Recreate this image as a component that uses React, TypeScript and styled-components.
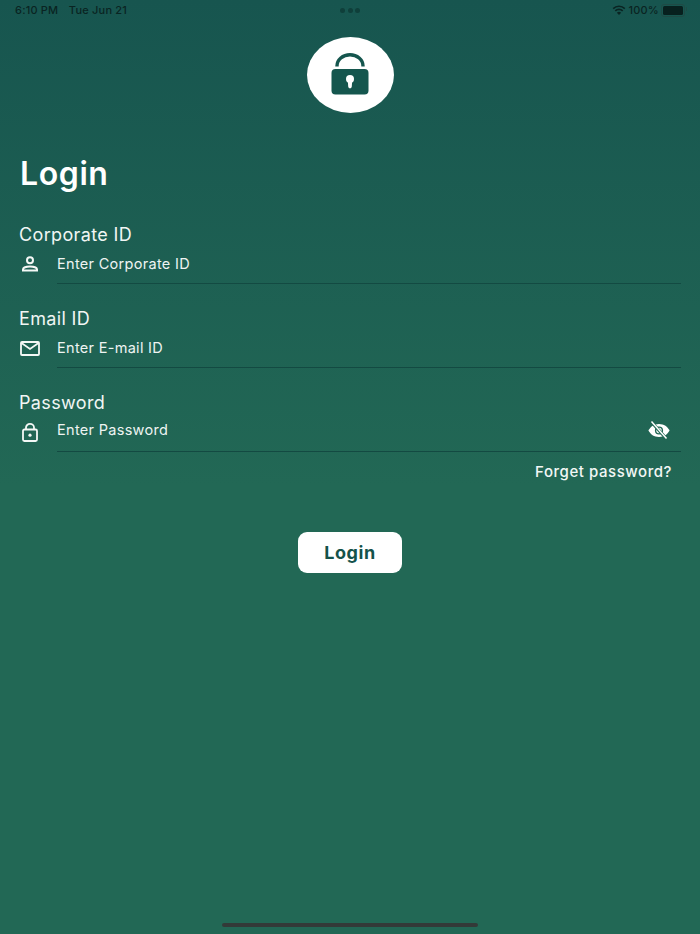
import { FC, ReactNode } from "react";
import styled, { createGlobalStyle } from "styled-components";

const GlobalStyle = createGlobalStyle`
  html, body {
    margin: 0;
    padding: 0;
    height: 100%;
  }

  body {
    font-family: Inter, "Liberation Sans", sans-serif;
    color: #fff;
  }
`;

const Page = styled.div`
  position: relative;
  display: flex;
  flex-direction: column;
  width: 700px;
  height: 934px;
  overflow: hidden;
  background: linear-gradient(180deg, #17554f 0%, #226855 52%, #226855 100%);
`;

const StatusBar = styled.div`
  display: grid;
  grid-template-columns: 1fr auto 1fr;
  align-items: center;
  height: 20px;
  padding: 0 15px;
  font-size: 11px;
  font-weight: 500;
  letter-spacing: 0.2px;
  color: #0a2422;
`;

const StatusTime = styled.div`
  display: flex;
  gap: 10.5px;
`;

const Dots = styled.div`
  display: flex;
  gap: 2.5px;
`;

const Dot = styled.span`
  width: 5px;
  height: 5px;
  border-radius: 50%;
  background: #0f3f3a;
`;

const StatusRight = styled.div`
  display: flex;
  justify-content: flex-end;
  align-items: center;
  gap: 3px;
`;

const Battery = styled.div`
  position: relative;
  width: 20px;
  height: 9px;
  margin-left: -1px;
  padding: 1px;
  border: 1px solid #1f4a45;
  border-radius: 3px;

  &::before {
    content: "";
    display: block;
    height: 100%;
    border-radius: 1.5px;
    background: #07201e;
  }

  &::after {
    content: "";
    position: absolute;
    top: 2px;
    right: -3px;
    width: 1.5px;
    height: 4px;
    border-radius: 0 1px 1px 0;
    background: #1f4a45;
  }
`;

const LogoWrap = styled.div`
  display: flex;
  justify-content: center;
  margin-top: 17px;
`;

const Logo = styled.div`
  display: flex;
  align-items: center;
  justify-content: center;
  width: 87px;
  height: 76px;
  padding-bottom: 2px;
  box-sizing: border-box;
  border-radius: 50%;
  background: #fff;
`;

const Form = styled.div`
  display: flex;
  flex-direction: column;
  padding: 0 19px;
`;

const Title = styled.h1`
  margin: 41px 0 0;
  padding-left: 1px;
  font-size: 32px;
  line-height: 40px;
  font-weight: 600;
  letter-spacing: 0.6px;
  color: #fff;
`;

const FieldList = styled.div`
  display: flex;
  flex-direction: column;
  gap: 24px;
  margin-top: 29px;
`;

const FieldBox = styled.div`
  display: flex;
  flex-direction: column;
`;

const Label = styled.div`
  font-size: 18px;
  line-height: 24px;
  letter-spacing: 0.35px;
  color: #f1f6f4;
`;

const InputRow = styled.div`
  display: flex;
  align-items: flex-start;
  height: 36px;
`;

const IconCell = styled.div`
  display: flex;
  align-items: center;
  justify-content: center;
  width: 22px;
  height: 22px;
  margin: 6px 16px 0 0;
`;

const InputBody = styled.div`
  flex: 1;
  display: flex;
  justify-content: space-between;
  height: 36px;
  border-bottom: 1px solid #134a42;
  box-sizing: content-box;
`;

const Placeholder = styled.div<{ $up?: boolean }>`
  margin-top: ${(p) => (p.$up ? "5px" : "7px")};
  font-size: 14.5px;
  line-height: 20px;
  letter-spacing: 0.3px;
  color: #eef4f2;
`;

const EyeCell = styled.div`
  margin: 6px 11px 0 0;
  height: 20px;
`;

const ForgotRow = styled.div`
  display: flex;
  justify-content: flex-end;
  padding: 11px 9px 0 0;
`;

const Forgot = styled.span`
  font-size: 15px;
  line-height: 20px;
  font-weight: 500;
  letter-spacing: 0.55px;
  color: #f2f7f5;
`;

const ButtonRow = styled.div`
  display: flex;
  justify-content: center;
  margin-top: 50px;
`;

const LoginButton = styled.button`
  width: 104px;
  height: 41px;
  padding: 0;
  border: 0;
  border-radius: 9px;
  background: #fff;
  font-family: inherit;
  font-size: 18px;
  font-weight: 700;
  letter-spacing: 0.6px;
  color: #14524a;
`;

const HomeBar = styled.div`
  position: absolute;
  left: 222px;
  bottom: 7px;
  width: 256px;
  height: 4px;
  border-radius: 2px;
  background: #333a38;
`;

const WifiIcon = () => (
  <svg width="14" height="10" viewBox="0 0 14 10">
    <path d="M7 10 4.9 7.7a3 3 0 0 1 4.2 0z" fill="#0a2422" />
    <path
      d="M3.3 5.9a5.2 5.2 0 0 1 7.4 0M1.2 3.6a8.2 8.2 0 0 1 11.6 0"
      fill="none"
      stroke="#0a2422"
      strokeWidth="1.6"
    />
  </svg>
);

const LogoLock = () => (
  <svg width="38" height="42" viewBox="0 0 38 42">
    <path
      d="M6 13.5V13a13 11.3 0 0 1 26 0v.5"
      fill="none"
      stroke="#15564e"
      strokeWidth="3.4"
    />
    <rect x="0.5" y="16" width="37" height="25.5" rx="4" fill="#15564e" />
    <circle cx="19" cy="26" r="4" fill="#fff" />
    <path d="M16.8 27h4.4l-.4 6.6a1.8 1.8 0 0 1-3.6 0z" fill="#fff" />
  </svg>
);

const UserIcon = () => (
  <svg width="18" height="16" viewBox="0 0 18 16" fill="none" stroke="#f4f8f6" strokeWidth="2">
    <circle cx="9" cy="4.2" r="3" />
    <path d="M2 14.6v-1.2c0-1.8 3.4-3 7-3s7 1.2 7 3v1.2z" />
  </svg>
);

const MailIcon = () => (
  <svg width="20" height="15" viewBox="0 0 20 15" fill="none" stroke="#f4f8f6" strokeWidth="1.8">
    <rect x="1" y="1" width="18" height="13" rx="1" />
    <path d="M1.5 2 10 8l8.5-6" />
  </svg>
);

const LockIcon = () => (
  <svg width="16" height="19" viewBox="0 0 16 19" fill="none" stroke="#f4f8f6" strokeWidth="1.8">
    <rect x="1" y="6.5" width="14" height="11.5" rx="1.4" />
    <path d="M4 6.5V4.6a4 3.7 0 0 1 8 0v1.9" />
    <circle cx="8" cy="12.2" r="1.6" fill="#f4f8f6" stroke="none" />
  </svg>
);

const EyeOffIcon = () => (
  <svg width="22" height="19" viewBox="0 0 22 19">
    <path
      d="M11 3C6 3 2.4 5.8.4 9.5 2.4 13.2 6 16 11 16s8.6-2.8 10.6-6.5C19.6 5.8 16 3 11 3z"
      fill="#fff"
    />
    <circle cx="11" cy="9.5" r="3.4" fill="none" stroke="#226855" strokeWidth="1.4" />
    <path d="M3.7 1.2 18.7 18" stroke="#226855" strokeWidth="3.2" />
    <path d="M3.5 .6 18.5 17.6" stroke="#fff" strokeWidth="1.5" />
  </svg>
);

interface IField {
  label: string;
  placeholder: string;
  icon: ReactNode;
  trailing?: ReactNode;
  raised?: boolean;
}

const Field: FC<IField> = ({ label, placeholder, icon, trailing, raised }) => (
  <FieldBox>
    <Label>{label}</Label>
    <InputRow>
      <IconCell>{icon}</IconCell>
      <InputBody>
        <Placeholder $up={raised}>{placeholder}</Placeholder>
        {trailing && <EyeCell>{trailing}</EyeCell>}
      </InputBody>
    </InputRow>
  </FieldBox>
);

export default function App() {
  return (
    <Page>
      <GlobalStyle />
      <StatusBar>
        <StatusTime>
          <span>6:10 PM</span>
          <span>Tue Jun 21</span>
        </StatusTime>
        <Dots>
          <Dot />
          <Dot />
          <Dot />
        </Dots>
        <StatusRight>
          <WifiIcon />
          <span>100%</span>
          <Battery />
        </StatusRight>
      </StatusBar>

      <LogoWrap>
        <Logo>
          <LogoLock />
        </Logo>
      </LogoWrap>

      <Form>
        <Title>Login</Title>
        <FieldList>
          <Field label="Corporate ID" placeholder="Enter Corporate ID" icon={<UserIcon />} />
          <Field label="Email ID" placeholder="Enter E-mail ID" icon={<MailIcon />} />
          <Field
            label="Password"
            placeholder="Enter Password"
            icon={<LockIcon />}
            trailing={<EyeOffIcon />}
            raised
          />
        </FieldList>
        <ForgotRow>
          <Forgot>Forget password?</Forgot>
        </ForgotRow>
        <ButtonRow>
          <LoginButton>Login</LoginButton>
        </ButtonRow>
      </Form>

      <HomeBar />
    </Page>
  );
}
